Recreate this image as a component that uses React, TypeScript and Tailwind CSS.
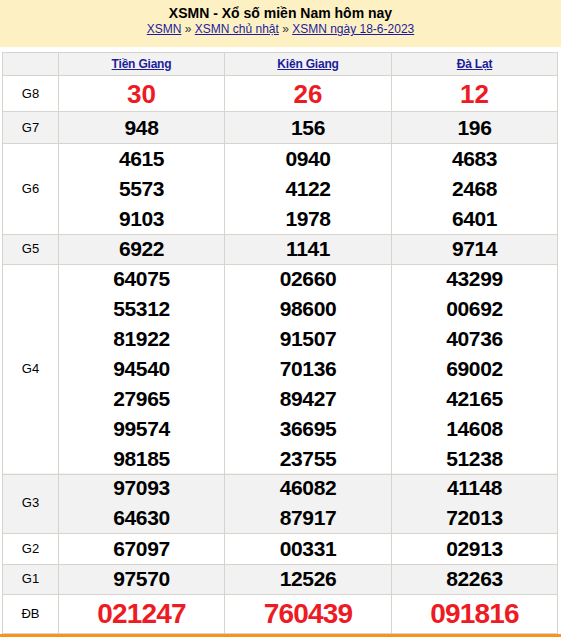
import React from "react";

type Row = { label: string; cols: string[][]; h: string; bg: string; kind: "red8" | "redDB" | "normal" };

const rows: Row[] = [
  { label: "G8", cols: [["30"], ["26"], ["12"]], h: "h-[36px]", bg: "bg-white", kind: "red8" },
  { label: "G7", cols: [["948"], ["156"], ["196"]], h: "h-[32px]", bg: "bg-[#f2f2f2]", kind: "normal" },
  {
    label: "G6",
    cols: [
      ["4615", "5573", "9103"],
      ["0940", "4122", "1978"],
      ["4683", "2468", "6401"],
    ],
    h: "h-[90px]",
    bg: "bg-white",
    kind: "normal",
  },
  { label: "G5", cols: [["6922"], ["1141"], ["9714"]], h: "h-[30px]", bg: "bg-[#f2f2f2]", kind: "normal" },
  {
    label: "G4",
    cols: [
      ["64075", "55312", "81922", "94540", "27965", "99574", "98185"],
      ["02660", "98600", "91507", "70136", "89427", "36695", "23755"],
      ["43299", "00692", "40736", "69002", "42165", "14608", "51238"],
    ],
    h: "h-[209px]",
    bg: "bg-white",
    kind: "normal",
  },
  {
    label: "G3",
    cols: [
      ["97093", "64630"],
      ["46082", "87917"],
      ["41148", "72013"],
    ],
    h: "h-[61px]",
    bg: "bg-[#f2f2f2]",
    kind: "normal",
  },
  { label: "G2", cols: [["67097"], ["00331"], ["02913"]], h: "h-[30px]", bg: "bg-white", kind: "normal" },
  { label: "G1", cols: [["97570"], ["12526"], ["82263"]], h: "h-[30px]", bg: "bg-[#f2f2f2]", kind: "normal" },
  { label: "ĐB", cols: [["021247"], ["760439"], ["091816"]], h: "h-[40px]", bg: "bg-white", kind: "redDB" },
];

const font = { fontFamily: '"Liberation Sans", Arial, sans-serif' };

function numClass(kind: Row["kind"]) {
  if (kind === "red8") return "text-[26px] font-bold text-[#ed1c24] leading-[30px]";
  if (kind === "redDB") return "text-[28px] font-bold text-[#ed1c24] leading-[32px] tracking-[-0.8px]";
  return "text-[21px] font-bold text-black leading-[30px] tracking-[-0.4px]";
}

export default function App() {
  return (
    <div className="w-[561px] h-[637px] bg-white overflow-hidden" style={font}>
      <div className="h-[47px] bg-[#fdf1c4] flex flex-col items-center pt-[5px]">
        <div className="text-[14px] font-bold text-black leading-[17px]">XSMN - Xổ số miền Nam hôm nay</div>
        <div className="text-[12px] text-[#333] leading-[15px]">
          <a className="text-[#1d1d9b] underline" href="#">XSMN</a>
          <span> » </span>
          <a className="text-[#1d1d9b] underline" href="#">XSMN chủ nhật</a>
          <span> » </span>
          <a className="text-[#1d1d9b] underline" href="#">XSMN ngày 18-6-2023</a>
        </div>
      </div>
      <div className="h-[5px]" />
      <div className="ml-[2px] w-[556px] border-l border-t border-[#d8d3cc]">
        <div className="grid grid-cols-[56px_166px_167px_166px] h-[23px] bg-[#f2f2f2]">
          <div className="border-r border-b border-[#d8d3cc]" />
          {["Tiền Giang", "Kiên Giang", "Đà Lạt"].map((p) => (
            <div key={p} className="border-r border-b border-[#d8d3cc] flex items-center justify-center">
              <a href="#" className="text-[12px] font-bold tracking-[-0.2px] text-[#1d1d9b] underline leading-[15px]">{p}</a>
            </div>
          ))}
        </div>
        {rows.map((r) => (
          <div key={r.label} className={`grid grid-cols-[56px_166px_167px_166px] ${r.h} ${r.bg}`}>
            <div className="border-r border-b border-[#d8d3cc] flex items-center justify-center text-[13px] text-black">
              {r.label}
            </div>
            {r.cols.map((c, i) => (
              <div key={i} className="border-r border-b border-[#d8d3cc] flex flex-col items-center justify-center">
                {c.map((n, j) => (
                  <div key={j} className={numClass(r.kind)}>{n}</div>
                ))}
              </div>
            ))}
          </div>
        ))}
      </div>
      <div className="h-[4px] bg-[#f7941d]" />
    </div>
  );
}
